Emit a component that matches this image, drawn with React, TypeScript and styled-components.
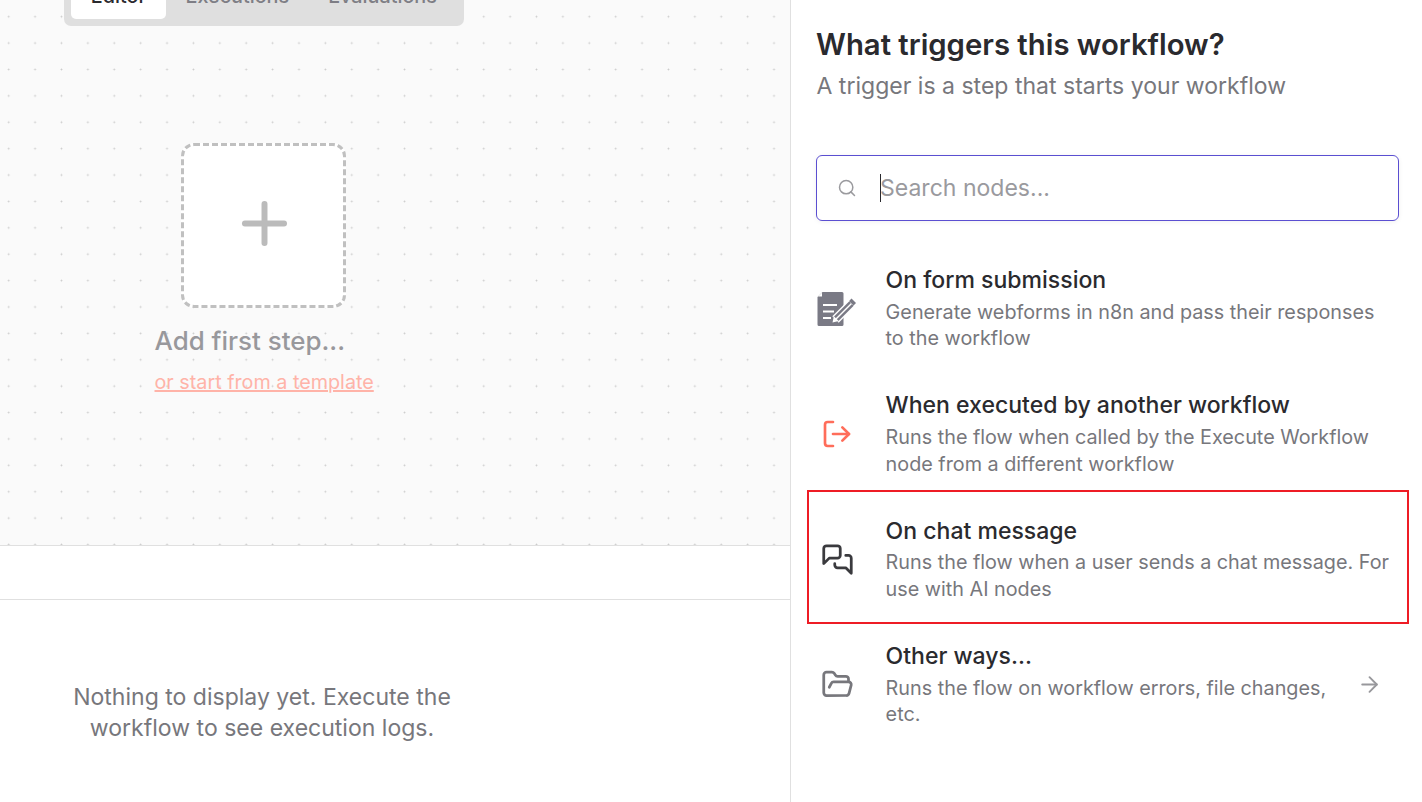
import React from "react";
import styled, { createGlobalStyle } from "styled-components";
import { ArrowRight, FolderOpen, LogOut, Plus, Search } from "lucide-react";

const GlobalStyle = createGlobalStyle`
    html, body, #root {
        margin: 0;
        height: 100%;
    }
    body {
        font-family: Inter, "Liberation Sans", sans-serif;
        background: #ffffff;
        overflow: hidden;
    }
`;

const Page = styled.div`
    display: flex;
    height: 802px;
`;

const LeftColumn = styled.div`
    display: flex;
    flex-direction: column;
    width: 790px;
    flex-shrink: 0;
`;

const Canvas = styled.div`
    position: relative;
    height: 545px;
    flex-shrink: 0;
    overflow: hidden;
    background-color: #fafafa;
    background-image: radial-gradient(circle, #cbcbcb 0.8px, transparent 1.1px);
    background-size: 26.4px 26.4px;
    background-position: -4.5px 3.5px;
    border-bottom: 1px solid #e0e0e0;
`;

const TabBar = styled.div`
    position: absolute;
    left: 64px;
    top: -34px;
    width: 400px;
    height: 60px;
    box-sizing: border-box;
    padding: 7px;
    display: flex;
    background: #dfdfdf;
    border-radius: 7px;
`;

const Tab = styled.div<{ $active?: boolean }>`
    display: flex;
    flex-shrink: 0;
    justify-content: center;
    align-items: center;
    height: 46px;
    width: ${(p) => (p.$active ? "95px" : "auto")};
    padding: ${(p) => (p.$active ? "0" : "0 19.5px")};
    background: ${(p) => (p.$active ? "#ffffff" : "transparent")};
    color: ${(p) => (p.$active ? "#2a2a2e" : "#7e7e85")};
    border-radius: 5px;
    font-size: 19.8px;
    font-weight: 500;
`;

const AddNode = styled.div`
    position: absolute;
    left: 155px;
    top: 143px;
    width: 219px;
    display: flex;
    flex-direction: column;
`;

const AddBox = styled.div`
    align-self: center;
    width: 165px;
    height: 165px;
    margin-left: -2px;
    box-sizing: border-box;
    padding: 0 0 5px 2px;
    display: flex;
    align-items: center;
    justify-content: center;
    background: #ffffff;
    border: 3px dashed #c0c0c0;
    border-radius: 13px;
    color: #bbbbbb;
`;

const AddTitle = styled.div`
    margin-top: 18px;
    margin-left: -0.5px;
    font-size: 25.92px;
    line-height: 30px;
    font-weight: 500;
    color: #98989c;
    white-space: nowrap;
`;

const TemplateLink = styled.a`
    margin-top: 14px;
    margin-left: -0.5px;
    font-size: 19.76px;
    line-height: 24px;
    color: #ffb3a8;
    text-decoration: underline;
    text-decoration-thickness: 2px;
    white-space: nowrap;
`;

const LogsHeader = styled.div`
    height: 53px;
    flex-shrink: 0;
    border-bottom: 1px solid #e0e0e0;
`;

const LogsBody = styled.div`
    flex: 1;
    padding: 82px 0 0 72px;
`;

const EmptyText = styled.div`
    width: 380px;
    text-align: center;
    font-size: 23.04px;
    line-height: 31px;
    color: #77777c;
`;

const Panel = styled.div`
    flex: 1;
    border-left: 1px solid #e0e0e0;
    display: flex;
    flex-direction: column;
    padding: 26px 23px 0 25px;
    min-width: 0;
`;

const Title = styled.h1`
    margin: 0;
    font-size: 29.3px;
    line-height: 38px;
    font-weight: 600;
    color: #2a2a2e;
    white-space: nowrap;
`;

const Subtitle = styled.div`
    margin-top: 6px;
    padding-left: 0.5px;
    font-size: 23.04px;
    line-height: 32px;
    color: #77777c;
    white-space: nowrap;
`;

const SearchBox = styled.div`
    margin-top: 53px;
    height: 66px;
    box-sizing: border-box;
    display: flex;
    align-items: center;
    border: 1px solid #5b4fd1;
    border-radius: 6px;
    padding-left: 20px;
    color: #9a9a9e;
    box-shadow: 0 1px 5px rgba(0, 0, 0, 0.06);
`;

const SearchText = styled.div`
    margin-left: 23px;
    border-left: 1px solid #2a2a2e;
    text-indent: -1px;
    font-size: 23.04px;
    line-height: 28px;
    color: #9a9a9e;
`;

const List = styled.div`
    margin-top: 43px;
    display: flex;
    flex-direction: column;
`;

const Row = styled.div<{ $highlight?: boolean }>`
    position: relative;
    height: 125.3px;
    display: flex;
    padding-left: 1px;
    &::after {
        content: "";
        display: ${(p) => (p.$highlight ? "block" : "none")};
        position: absolute;
        left: -9px;
        right: -10px;
        top: -25px;
        height: 134px;
        box-sizing: border-box;
        border: 2px solid #ee1c25;
    }
`;

const IconCell = styled.div<{ $color: string; $inset?: number }>`
    width: 68.6px;
    flex-shrink: 0;
    box-sizing: border-box;
    height: 90px;
    padding-left: ${(p) => p.$inset ?? 0}px;
    display: flex;
    align-items: center;
    color: ${(p) => p.$color};
`;

const RowText = styled.div`
    flex: 1;
    min-width: 0;
    padding-right: 5px;
`;

const RowTitle = styled.div`
    font-size: 23.04px;
    line-height: 32px;
    font-weight: 450;
    color: #2a2a2e;
    white-space: nowrap;
`;

const RowDescription = styled.div`
    margin-top: 2.7px;
    font-size: 19.8px;
    line-height: 26.7px;
    color: #77777c;
`;

const ArrowCell = styled.div`
    height: 90px;
    margin: 0 17px;
    display: flex;
    align-items: center;
    color: #98989c;
`;

const FormIcon = () => (
    <svg width="40" height="34" viewBox="0 0 40 34" fill="none">
        <path
            d="M5.5 0H25a1.5 1.5 0 0 1 1.5 1.5V32.5A1.5 1.5 0 0 1 25 34H2a1.5 1.5 0 0 1-1.5-1.5V5Z"
            fill="#7a7a85"
        />
        <path d="M6 13h14M6 19.5h11M6 26h8" stroke="#ffffff" strokeWidth="1.8" />
        <path d="M1 4.5 5 .5v4Z" fill="#ffffff" />
        <path d="M18.5 27.5 36 10" stroke="#ffffff" strokeWidth="9" />
        <path d="M18.5 27.5 34.5 11.5" stroke="#7a7a85" strokeWidth="6.2" />
        <path d="M19 27 34.5 11.5" stroke="#ffffff" strokeWidth="1.4" />
        <path d="M15.5 30.5l1.4-6.2 4.8 4.8Z" fill="#ffffff" />
        <path d="M34.5 6.5l4.5 4.5-2.4 2.4-4.5-4.5Z" fill="#7a7a85" />
    </svg>
);

const ChatIcon = () => (
    <svg width="33" height="33" viewBox="0 0 24 24" fill="none" stroke="currentColor" strokeWidth="2" strokeLinecap="round" strokeLinejoin="round">
        <path d="M14 9a2 2 0 0 1-2 2H6l-4 4V4c0-1.1.9-2 2-2h8a2 2 0 0 1 2 2z" />
        <path d="M18 9h2a2 2 0 0 1 2 2v11l-4-4h-6a2 2 0 0 1-2-2v-1" />
    </svg>
);

const App = () => (
    <>
        <GlobalStyle />
        <Page>
            <LeftColumn>
                <Canvas>
                    <TabBar>
                        <Tab $active>Editor</Tab>
                        <Tab>Executions</Tab>
                        <Tab>Evaluations</Tab>
                    </TabBar>
                    <AddNode>
                        <AddBox>
                            <Plus size={67} strokeWidth={2.14} />
                        </AddBox>
                        <AddTitle>Add first step...</AddTitle>
                        <TemplateLink>or start from a template</TemplateLink>
                    </AddNode>
                </Canvas>
                <LogsHeader />
                <LogsBody>
                    <EmptyText>Nothing to display yet. Execute the workflow to see execution logs.</EmptyText>
                </LogsBody>
            </LeftColumn>
            <Panel>
                <Title>What triggers this workflow?</Title>
                <Subtitle>A trigger is a step that starts your workflow</Subtitle>
                <SearchBox>
                    <Search size={20} strokeWidth={1.8} />
                    <SearchText>Search nodes...</SearchText>
                </SearchBox>
                <List>
                    <Row>
                        <IconCell $color="#7a7a85"><FormIcon /></IconCell>
                        <RowText>
                            <RowTitle>On form submission</RowTitle>
                            <RowDescription>Generate webforms in n8n and pass their responses to the workflow</RowDescription>
                        </RowText>
                    </Row>
                    <Row>
                        <IconCell $color="#ff6d5a" $inset={4}><LogOut size={32} strokeWidth={2} /></IconCell>
                        <RowText>
                            <RowTitle>When executed by another workflow</RowTitle>
                            <RowDescription>Runs the flow when called by the Execute Workflow node from a different workflow</RowDescription>
                        </RowText>
                    </Row>
                    <Row $highlight>
                        <IconCell $color="#3a3a3e" $inset={4}><ChatIcon /></IconCell>
                        <RowText>
                            <RowTitle>On chat message</RowTitle>
                            <RowDescription>Runs the flow when a user sends a chat message. For use with AI nodes</RowDescription>
                        </RowText>
                    </Row>
                    <Row>
                        <IconCell $color="#77777c" $inset={4}><FolderOpen size={33} strokeWidth={2} /></IconCell>
                        <RowText>
                            <RowTitle>Other ways...</RowTitle>
                            <RowDescription>Runs the flow on workflow errors, file changes, etc.</RowDescription>
                        </RowText>
                        <ArrowCell><ArrowRight size={25} strokeWidth={1.8} /></ArrowCell>
                    </Row>
                </List>
            </Panel>
        </Page>
    </>
);

export default App;
